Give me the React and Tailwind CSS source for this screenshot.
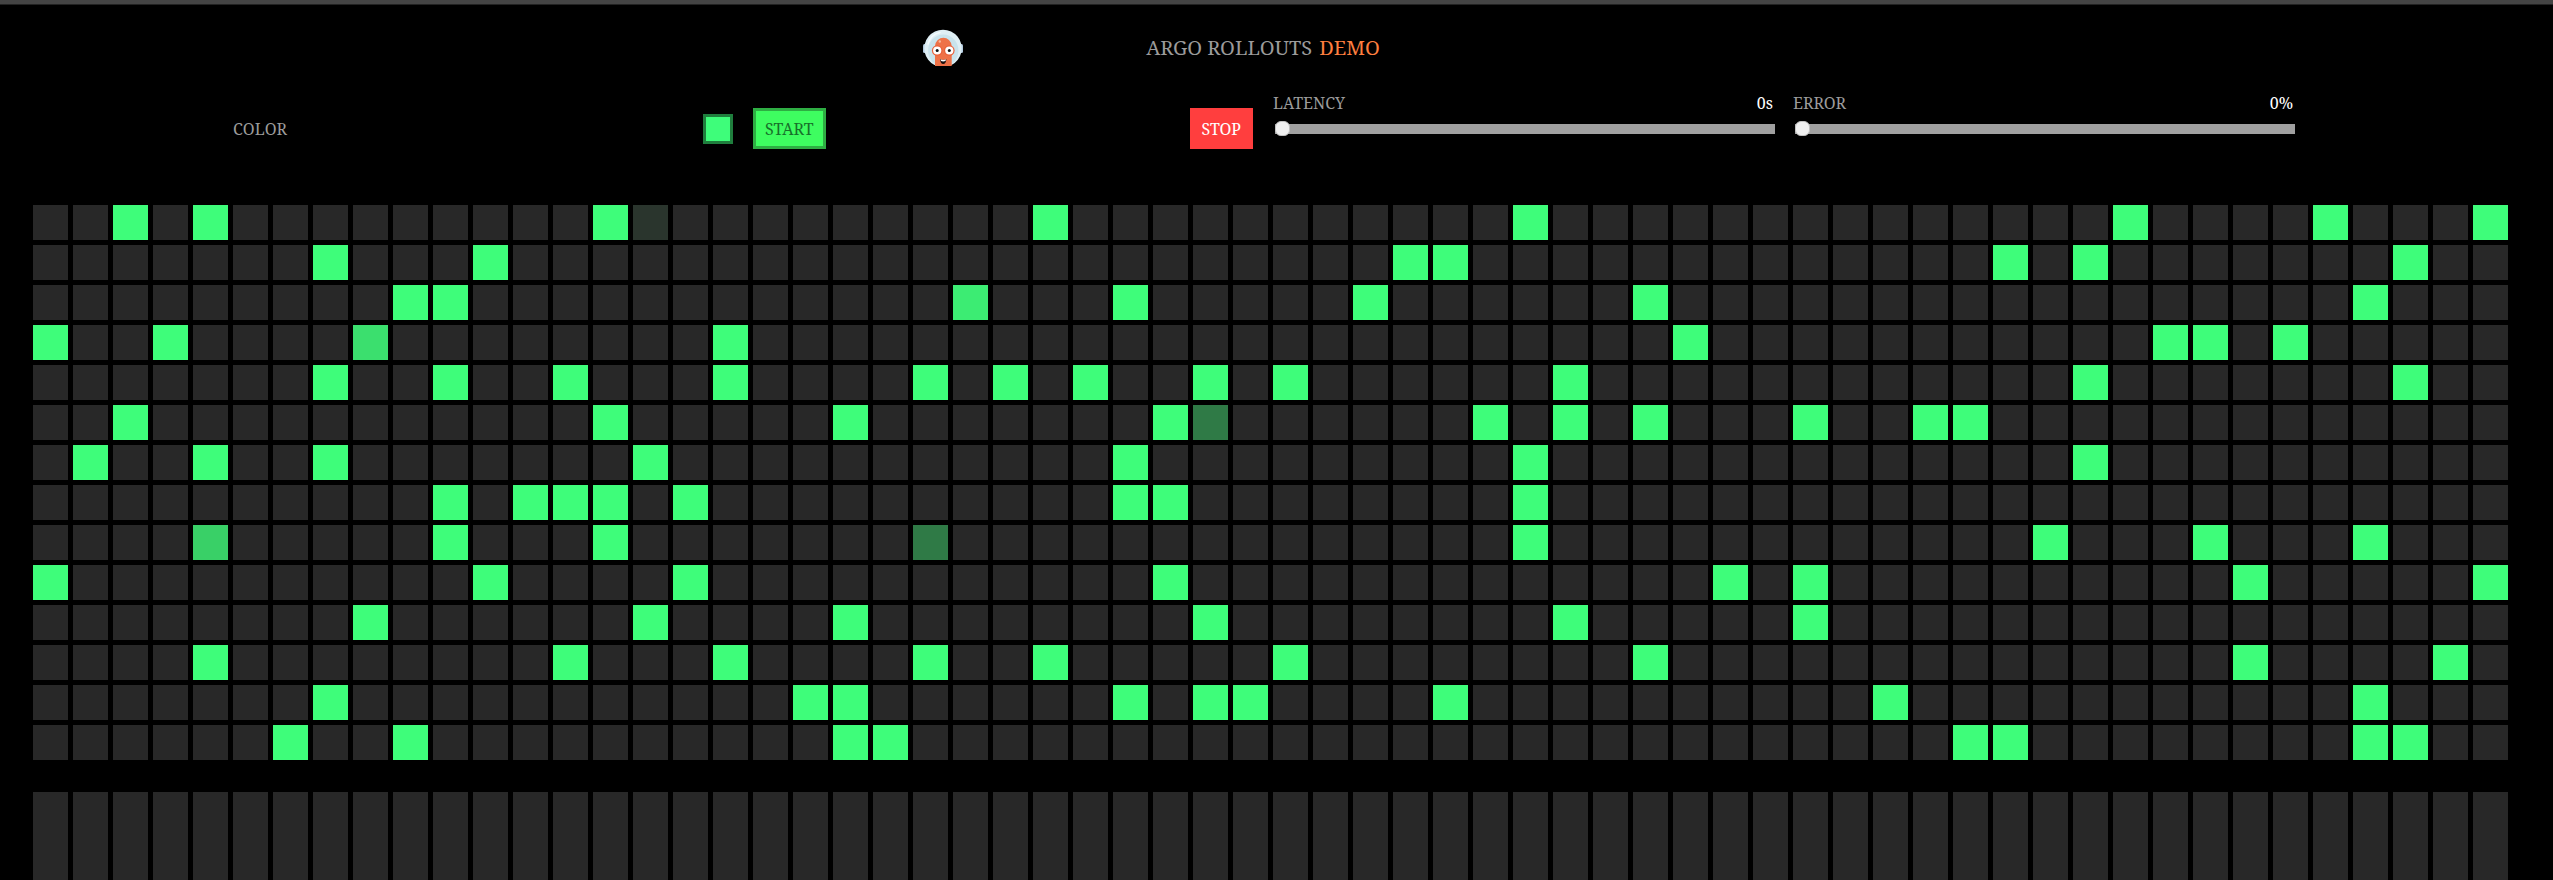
const COLUMNS = 62;

// Columns answered by a green pod, one list for each row of the grid.
const HITS = [
  [2, 4, 14, 25, 37, 52, 57, 61],
  [7, 11, 34, 35, 49, 51, 59],
  [9, 10, 27, 33, 40, 58],
  [0, 3, 17, 41, 53, 54, 56],
  [7, 10, 13, 17, 22, 24, 26, 29, 31, 38, 51, 59],
  [2, 14, 20, 28, 36, 38, 40, 44, 47, 48],
  [1, 4, 7, 15, 27, 37, 51],
  [10, 12, 13, 14, 16, 27, 28, 37],
  [10, 14, 37, 50, 54, 58],
  [0, 11, 16, 28, 42, 44, 55, 61],
  [8, 15, 20, 29, 38, 44],
  [4, 13, 17, 22, 25, 31, 40, 55, 60],
  [7, 19, 20, 27, 29, 30, 35, 46, 58],
  [6, 9, 20, 21, 48, 49, 58, 59],
];

// Cells that are still fading out, keyed by "row-column".
const FADING = {
  '0-15': 'bg-[#2a352d]',
  '2-23': 'bg-[#3cec73]',
  '3-8': 'bg-[#3bdf6e]',
  '5-29': 'bg-[#2f7a46]',
  '8-4': 'bg-[#39d067]',
  '8-22': 'bg-[#2f7a46]',
};

const columns = Array.from({ length: COLUMNS }, (_, i) => i);

function cellColor(row, column) {
  if (HITS[row].includes(column)) return 'bg-[#3efd7a]';
  return FADING[`${row}-${column}`] || 'bg-[#282828]';
}

function Logo() {
  return (
    <svg viewBox="0 0 40 37" className="h-[37px] w-10" role="img" aria-label="Argo">
      <rect x="0" y="15" width="4" height="9" rx="1.5" fill="#b3cbe0" />
      <rect x="36" y="15" width="4" height="9" rx="1.5" fill="#b3cbe0" />
      <path d="M11.500 36 A18.700 18.700 0 1 1 28.500 36 Z" fill="#dfeff5" />
      <path d="M12 35 A15.200 16 0 1 1 28.500 35 Z" fill="#c9e3ec" />
      <path d="M5 15 C7 8 12 4.500 17 3.500" stroke="#f4fbfd" strokeWidth="1.500" fill="none" strokeLinecap="round" />
      <path d="M12 37 V17 A8.400 9.300 0 0 1 28.700 17 V37 Z" fill="#ee7248" />
      <circle cx="14.200" cy="21.500" r="5.300" fill="#e9613a" />
      <circle cx="26.300" cy="21.500" r="5.300" fill="#e9613a" />
      <circle cx="14.200" cy="21.500" r="4.100" fill="#fff" />
      <circle cx="26.300" cy="21.500" r="4.100" fill="#fff" />
      <circle cx="14.200" cy="21.500" r="1.500" fill="#111" />
      <circle cx="26.300" cy="21.500" r="1.500" fill="#111" />
      <path d="M17 30 Q20.200 31.800 23.400 30 Q23 35 20.200 35 Q17.400 35 17 30 Z" fill="#1c1010" />
      <path d="M17.500 30.300 Q20.200 31.800 23 30.300 L22.500 32 Q20.200 32.800 18 32 Z" fill="#fff" />
      <circle cx="16.800" cy="12.500" r="1.200" fill="#f9b79a" />
    </svg>
  );
}

function Slider({ id, label, value }) {
  return (
    <div className="px-[10px]">
      <div className="flex justify-between text-base leading-6">
        <label htmlFor={id} className="text-[#9b9b9b]">
          {label}
        </label>
        <output htmlFor={id} className="text-white">
          {value}
        </output>
      </div>
      <input
        id={id}
        type="range"
        min="0"
        max="100"
        defaultValue="0"
        className="mt-[6px] ml-[2px] block h-4 w-full appearance-none bg-transparent [&::-webkit-slider-runnable-track]:h-[10px] [&::-webkit-slider-runnable-track]:bg-[#a0a0a0] [&::-webkit-slider-thumb]:-mt-[3px] [&::-webkit-slider-thumb]:h-[15px] [&::-webkit-slider-thumb]:w-[15px] [&::-webkit-slider-thumb]:appearance-none [&::-webkit-slider-thumb]:rounded-[6px] [&::-webkit-slider-thumb]:border [&::-webkit-slider-thumb]:border-[#c0c0c0] [&::-webkit-slider-thumb]:bg-[#f0f0f0]"
      />
    </div>
  );
}

export default function App() {
  return (
    <div className="min-h-screen border-t-4 border-[#444] bg-black font-['Noto_Serif',serif]">
      <header className="border-t border-[#222] pr-[250px] pl-[223px]">
        <div className="grid grid-cols-[1fr_600px_1fr] pt-6">
          <div className="flex h-[38px] justify-end">
            <Logo />
          </div>
          <h1 className="flex justify-center gap-[7px] text-xl leading-[38px] text-[#9b9b9b]">
            ARGO ROLLOUTS <span className="text-[#ff7f3f]">DEMO</span>
          </h1>
        </div>
        <div className="mt-6 grid grid-cols-4 pb-14">
          <div className="mt-[17px] flex h-[41px] items-center justify-between px-[10px]">
            <label htmlFor="color" className="text-base text-[#9b9b9b]">
              COLOR
            </label>
            <button
              id="color"
              type="button"
              aria-label="Color"
              className="h-[30px] w-[30px] border-3 border-[#1f7e3d] bg-[#3efd7a]"
            />
          </div>
          <div className="mt-[17px] flex justify-between px-[10px]">
            <button
              type="button"
              className="h-[41px] border-3 border-[#2eae43] bg-[#3efd60] px-[9px] text-base text-[#17702a]"
            >
              START
            </button>
            <button type="button" className="h-[41px] bg-[#ff3e3e] px-3 text-base text-white">
              STOP
            </button>
          </div>
          <Slider id="latency" label="LATENCY" value="0s" />
          <Slider id="error" label="ERROR" value="0%" />
        </div>
      </header>
      <main className="pr-[45px] pl-[33px]">
        <div className="grid grid-cols-[repeat(62,minmax(0,1fr))] gap-[5px]">
          {HITS.map((_, row) =>
            columns.map((column) => (
              <div key={`${row}-${column}`} className={`aspect-square ${cellColor(row, column)}`} />
            ))
          )}
        </div>
        <div className="mt-8 grid h-[88px] grid-cols-[repeat(62,minmax(0,1fr))] gap-[5px]">
          {columns.map((column) => (
            <div key={column} className="bg-[#282828]" />
          ))}
        </div>
      </main>
    </div>
  );
}
